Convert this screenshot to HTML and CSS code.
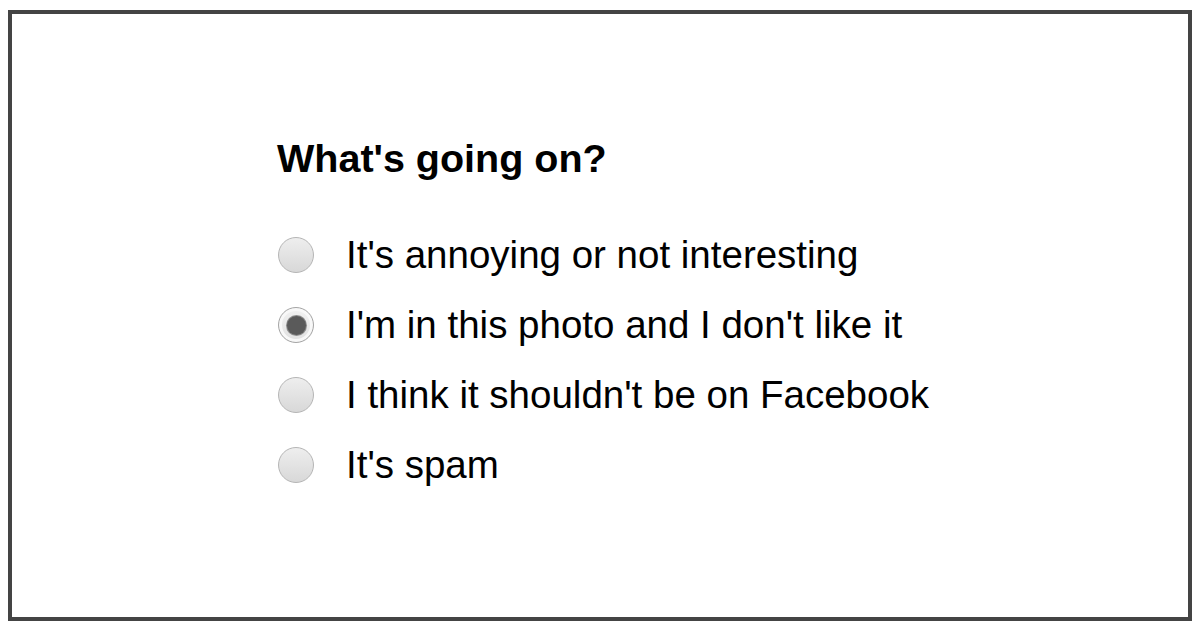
FILE: index.html
```html
<!DOCTYPE html>
<html lang="en">
<head>
  <meta charset="UTF-8" />
  <title>What's going on?</title>
  <link rel="stylesheet" href="styles.css">
</head>
<body>

<div class="frame">
  <div class="report">
    <h2 class="report-title">What's going on?</h2>

    <ul class="options">
      <li class="option">
        <span class="radio"></span>
        <span class="label">It's annoying or not interesting</span>
      </li>
      <li class="option">
        <span class="radio checked"></span>
        <span class="label">I'm in this photo and I don't like it</span>
      </li>
      <li class="option">
        <span class="radio"></span>
        <span class="label">I think it shouldn't be on Facebook</span>
      </li>
      <li class="option">
        <span class="radio"></span>
        <span class="label">It's spam</span>
      </li>
    </ul>
  </div>
</div>

</body>
</html>
```

FILE: styles.css
```css
body {
  margin: 0;
  padding: 10px 8px 9px;
  background-color: #fff;
  font-family: "Liberation Sans", Arial, sans-serif;
  color: #000;
}

.frame {
  height: 603px;
  border: 4px solid #444;
  background-color: #fff;
}

.report {
  padding: 121px 0 0 265px;
}

.report-title {
  margin: 0;
  font-size: 39.5px;
  line-height: 46px;
  font-weight: bold;
  color: #000;
}

.options {
  list-style: none;
  margin: 39px 0 0;
  padding: 0;
}

.option {
  display: flex;
  align-items: center;
  height: 70px;
}

.radio {
  box-sizing: border-box;
  width: 36px;
  height: 36px;
  margin-left: 1px;
  margin-right: 32px;
  border-radius: 50%;
  border: 1px solid #b5b5b5;
  background: linear-gradient(#eeeeee, #d8d8d8);
  display: flex;
  align-items: center;
  justify-content: center;
}

.radio.checked {
  background: linear-gradient(#f2f2f2, #e0e0e0);
  border-color: #a5a5a5;
  box-shadow: inset 0 0 0 3px #f8f8f8;
}

.radio.checked::after {
  content: "";
  width: 19px;
  height: 19px;
  border-radius: 50%;
  background-color: #5a5a5a;
  box-shadow: 0 0 0 1px #8c8c8c;
}

.label {
  font-size: 38.5px;
  line-height: 70px;
  color: #000;
}
```
